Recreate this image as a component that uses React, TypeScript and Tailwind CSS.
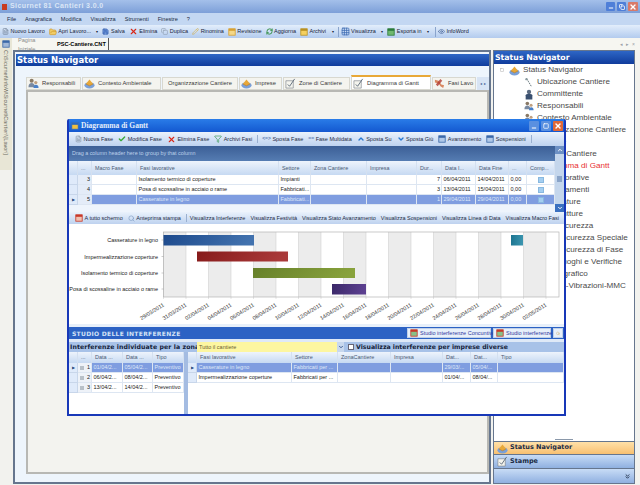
import type { ReactNode } from "react";
import { Check, ChevronDown, ChevronUp, ChevronsDown, Copy, Eye, FileText, Filter, FolderOpen, Grid3x3, Minus, Pencil, RefreshCw, Save, Search, Square, X } from "lucide-react";

const MAIN_COLS = "grid-cols-[9px_14px_45px_142px_32px_56px_50px_25px_34px_33px_18px_28px]";
const LEFT_COLS = "grid-cols-[9px_14px_31px_30px_31px]";
const RIGHT_COLS = "grid-cols-[9px_95px_46px_53px_52px_28px_27px_1fr]";

function Tile({ from, to }: { from: string; to: string }) {
  return (
    <svg viewBox="0 0 10 10" className="w-[8px] h-[8px] shrink-0">
      <rect x="1" y="1" width="8" height="8" fill={from} stroke={to} strokeWidth="1" />
      <rect x="1" y="1" width="8" height="2.5" fill={to} />
    </svg>
  );
}

function People({ size = "w-[11px] h-[11px]" }: { size?: string }) {
  return (
    <svg viewBox="0 0 12 12" className={`${size} shrink-0`}>
      <circle cx="4" cy="3" r="2.2" fill="#8a7a66" />
      <path d="M0.5 10c0-3 1.5-4.5 3.5-4.5S7.5 7 7.5 10z" fill="#7a8aa0" />
      <circle cx="8.5" cy="5" r="1.8" fill="#c0a080" />
      <path d="M6 11c0-2.5 1-3.6 2.7-3.6S11.5 8.5 11.5 11z" fill="#4a80c8" />
    </svg>
  );
}

function Crate({ size = "w-[11px] h-[11px]" }: { size?: string }) {
  return (
    <svg viewBox="0 0 12 12" className={`${size} shrink-0`}>
      <ellipse cx="6" cy="8" rx="5.5" ry="3.5" fill="#7aa0d8" />
      <path d="M2 6.5 6 1.5 10 6.5 6 8.5z" fill="#e8a838" />
      <path d="M2 6.5 6 8.5 10 6.5" fill="none" stroke="#b87818" strokeWidth="0.6" />
    </svg>
  );
}

function Note({ size = "w-[11px] h-[11px]" }: { size?: string }) {
  return (
    <svg viewBox="0 0 12 12" className={`${size} shrink-0`}>
      <path d="M1 3h8v8H1z" fill="#f4f4ee" stroke="#7a8088" strokeWidth="0.7" />
      <path d="M3 7l2 2 5.5-8" fill="none" stroke="#5a6878" strokeWidth="1" />
    </svg>
  );
}

function Tools({ size = "w-[11px] h-[11px]" }: { size?: string }) {
  return (
    <svg viewBox="0 0 12 12" className={`${size} shrink-0`}>
      <path d="M1 2l4 1 3 4 3 1-1 3-3-2-2-3-4-1z" fill="#d88860" />
      <path d="M7 1l2 2-5 6-2-2z" fill="#b03830" opacity="0.8" />
    </svg>
  );
}

function TopBtn({ icon, label, arrow }: { icon: ReactNode; label: string; arrow?: boolean }) {
  return (
    <div className="flex items-center gap-[1.5px] mr-[4px]">
      {icon}
      <span className="whitespace-nowrap">{label}</span>
      {arrow && <span className="ml-[4px] text-[4px]">▾</span>}
    </div>
  );
}

function TitleBar() {
  return (
    <div className="h-[13px] shrink-0 flex items-center bg-gradient-to-b from-[#a4c0ea] to-[#7d9fd8] pl-[2px]">
      <div className="w-[5px] h-[6px] bg-[#c83a20] mr-[3px]" />
      <span className="text-[7px] font-bold tracking-[0.4px] text-[#dbe6f6]">Sicurnet 81 Cantieri 3.0.0</span>
      <div className="ml-auto flex items-center gap-[2px] pr-[2px]">
        <div className="w-[9px] h-[9px] rounded-[1px] bg-[#4f7fd8] flex items-end justify-center text-white"><Minus className="w-[6px] h-[6px]" strokeWidth={4} /></div>
        <div className="w-[9px] h-[9px] rounded-[1px] bg-[#4f7fd8] flex items-center justify-center text-white"><Copy className="w-[6px] h-[6px]" strokeWidth={3} /></div>
        <div className="w-[10px] h-[9px] rounded-[1px] bg-[#d87a6a] flex items-center justify-center text-white"><X className="w-[8px] h-[8px]" strokeWidth={4} /></div>
      </div>
    </div>
  );
}

function MenuBar() {
  return (
    <div className="h-[12px] shrink-0 flex items-center gap-[9px] pl-[7px] bg-[#c3d7f2] text-[#1a2a44] text-[5.6px]">
      {["File", "Anagrafica", "Modifica", "Visualizza", "Strumenti", "Finestre", "?"].map((m) => (
        <span key={m}>{m}</span>
      ))}
    </div>
  );
}

function MainToolbar() {
  return (
    <div className="h-[13px] shrink-0 flex items-center pl-[2px] bg-gradient-to-b from-[#e3eefb] to-[#b3cbee] text-[#16233a] text-[5.5px]">
      <TopBtn icon={<FileText className="w-[7px] h-[7px] text-[#6a7a90]" />} label="Nuovo Lavoro" />
      <TopBtn icon={<FolderOpen className="w-[8px] h-[8px] text-[#d09a28] fill-[#f0cc68]" />} label="Apri Lavoro..." arrow />
      <TopBtn icon={<Save className="w-[7px] h-[7px] text-[#2c58a8] fill-[#6c94d8]" />} label="Salva" />
      <TopBtn icon={<X className="w-[9px] h-[9px] text-[#d82818]" strokeWidth={3} />} label="Elimina" />
      <TopBtn icon={<Copy className="w-[7px] h-[7px] text-[#8a98aa]" />} label="Duplica" />
      <TopBtn icon={<Pencil className="w-[7px] h-[7px] text-[#d8b048]" />} label="Rinomina" />
      <TopBtn icon={<Tile from="#f4d888" to="#d8a030" />} label="Revisione" />
      <TopBtn icon={<RefreshCw className="w-[7px] h-[7px] text-[#2a8a3a]" strokeWidth={3} />} label="Aggiorna" />
      <TopBtn icon={<Tile from="#f4d060" to="#b89020" />} label="Archivi" arrow />
      <div className="w-px h-[10px] bg-[#8aa4cc] mr-[2px]" />
      <TopBtn icon={<Grid3x3 className="w-[9px] h-[9px] text-[#3a68b0]" />} label="Visualizza" arrow />
      <TopBtn icon={<Tile from="#70b870" to="#2a7a3a" />} label="Esporta in" arrow />
      <div className="w-px h-[10px] bg-[#8aa4cc] mx-[2px]" />
      <TopBtn icon={<Eye className="w-[7px] h-[7px] text-[#3a5a90]" />} label="InfoWord" />
    </div>
  );
}

function DocTabs() {
  return (
    <div className="h-[12px] flex items-end pl-[4px] bg-[#f6f6f1] text-[5.6px]">
      <div className="h-[11px] flex items-center px-[2px] text-[#8a8a8a] w-[40px]">Pagina Iniziale</div>
      <div className="h-[12px] flex items-center px-[1px] font-bold text-black border-r border-[#555] pr-[2px]">PSC-Cantiere.CNT</div>
      <div className="ml-auto pr-[5px] pb-[2px] flex gap-[3px] text-[#9aa0a8] text-[5px]">
        <span>◂</span><span>▸</span><span>×</span>
      </div>
    </div>
  );
}

function SheetTabs() {
  const base = "h-[13px] flex items-center gap-[3px] px-[1px] border border-[#d8d8d0] bg-[#f4f4ef] text-[#3a3a3a] text-[5.8px] whitespace-nowrap";
  return (
    <div className="flex items-end h-[15px] ml-[11px] gap-[1px]">
      <div className={`${base} w-[55px]`}><People />Responsabili</div>
      <div className={`${base} w-[79px]`}><Crate />Contesto Ambientale</div>
      <div className={`${base} w-[76px] justify-center`}>Organizzazione Cantiere</div>
      <div className={`${base} w-[43px]`}><Crate />Imprese</div>
      <div className={`${base} w-[67px]`}><Note />Zone di Cantiere</div>
      <div className={`${base} w-[80px] h-[15px] bg-white border-t-2 border-t-[#e8a838]`}><Note />Diagramma di Gantt</div>
      <div className={`${base} w-[44px] overflow-hidden`}><Tools />Fasi Lavo</div>
      <div className="h-[13px] w-[12px] flex items-center justify-center gap-[2px] text-[4px] text-[#3a5a90] bg-[#d8e4f4]"><span>◂</span><span>▸</span></div>
    </div>
  );
}

function DocPanel() {
  return (
    <div className="w-[478px] flex flex-col border-2 border-[#66768e] bg-[#eef5fc]">
      <div className="h-[2px]" />
      <div className="h-[12px] ml-[1px] flex items-center pl-[1px] bg-gradient-to-b from-[#2e66c6] to-[#103c9c] text-white font-bold text-[8.5px] font-['DejaVu_Sans',sans-serif]">
        Status Navigator
      </div>
      <div className="h-[9px]" />
      <SheetTabs />
      <div className="flex-1 ml-[11px] border-2 border-[#b8b8b4] bg-[#f3f3ef]" />
      <div className="h-[8px]" />
    </div>
  );
}

const TREE = [
  "Ubicazione Cantiere", "Committente", "Responsabili", "Contesto Ambientale", "Organizzazione Cantiere",
  "Imprese", "Zone di Cantiere", "Diagramma di Gantt", "Fasi lavorative", "Apprestamenti",
  "Attrezzature", "Infrastrutture", "Costi Sicurezza", "Oneri Sicurezza Speciale", "Oneri Sicurezza di Fase",
  "Sopralluoghi e Verifiche", "Rilievo grafico", "Rumore-Vibrazioni-MMC",
];

function TreeIcon({ name }: { name: string }) {
  if (name === "Committente") {
    return (
      <svg viewBox="0 0 12 12" className="w-[10px] h-[11px] shrink-0">
        <circle cx="6" cy="3" r="2.6" fill="#5a6a80" />
        <path d="M2 12V7q0-2 4-2t4 2v5z" fill="#3a5070" />
      </svg>
    );
  }
  if (name === "Ubicazione Cantiere") {
    return (
      <svg viewBox="0 0 12 12" className="w-[10px] h-[11px] shrink-0">
        <path d="M3 1l6 10" stroke="#6a7a80" strokeWidth="1.2" strokeDasharray="2 1" fill="none" />
        <circle cx="3" cy="2" r="1.4" fill="#8a9aa0" />
      </svg>
    );
  }
  return <People size="w-[10px] h-[10px]" />;
}

function NavPanel() {
  return (
    <div className="w-[142px] flex flex-col border border-[#66768e] bg-white">
      <div className="h-[13px] flex items-center pl-[1px] bg-gradient-to-b from-[#2e66c6] to-[#103c9c] text-white font-bold text-[7.8px] font-['DejaVu_Sans',sans-serif]">
        Status Navigator
      </div>
      <div className="flex-1 pt-[0px] text-[8.1px] text-[#4a4a4a] overflow-hidden">
        <div className="h-[12px] flex items-center pl-[6px]">
          <Square className="w-[4px] h-[4px] text-[#8a8a8a] mr-[5px]" />
          <Crate />
          <span className="ml-[3px]">Status Navigator</span>
        </div>
        {TREE.map((t) => (
          <div key={t} className={`h-[12px] flex items-center pl-[30px] gap-[3px] whitespace-nowrap ${t === "Diagramma di Gantt" ? "text-[#e83030]" : ""}`}>
            <TreeIcon name={t} />
            <span>{t}</span>
          </div>
        ))}
      </div>
      <div className="h-[2px] flex justify-center"><div className="w-[18px] h-px bg-[#8a98aa]" /></div>
      <div className="h-[13px] flex items-center gap-[2px] pl-[3px] border-t border-[#66768e] bg-gradient-to-b from-[#ffe0a8] to-[#f8c070] text-[#1a2a44] font-bold text-[6.5px] font-['DejaVu_Sans',sans-serif]">
        <Crate />Status Navigator
      </div>
      <div className="h-[14px] flex items-center gap-[2px] pl-[3px] border-t border-[#66768e] bg-gradient-to-b from-[#c8dcf6] to-[#8fb0e0] text-[#1a2a44] font-bold text-[6.5px] font-['DejaVu_Sans',sans-serif]">
        <Note />Stampe
      </div>
      <div className="h-[15px] flex items-center justify-end pr-[3px] border-t border-[#66768e] bg-gradient-to-b from-[#c8dcf6] to-[#90b0e0] text-[#1a2a44]">
        <ChevronsDown className="w-[7px] h-[7px]" strokeWidth={3} />
      </div>
    </div>
  );
}

function DlgBtn({ icon, label, last }: { icon?: ReactNode; label: string; last?: boolean }) {
  return (
    <div className={`flex items-center gap-[1.5px] pr-[5px] whitespace-nowrap ${last ? "border-r border-[#9ab0d0]" : ""}`}>
      {icon}
      <span>{label}</span>
    </div>
  );
}

function DialogToolbar() {
  return (
    <div className="h-[14px] shrink-0 flex items-center pl-[6px] bg-gradient-to-b from-[#eaf2fc] to-[#bed2ef] text-[#1c2a44] text-[5.5px]">
      <DlgBtn icon={<FileText className="w-[7px] h-[8px] text-[#7a8898]" />} label="Nuova Fase" />
      <DlgBtn icon={<Check className="w-[8px] h-[8px] text-[#38a838]" strokeWidth={4} />} label="Modifica Fase" />
      <DlgBtn icon={<X className="w-[9px] h-[9px] text-[#d82818]" strokeWidth={3} />} label="Elimina Fase" />
      <DlgBtn icon={<Filter className="w-[8px] h-[8px] text-[#3a9a58]" />} label="Archivi Fasi" last />
      <div className="w-[4px]" />
      <DlgBtn icon={<span className="text-[#5a7ab0] text-[5px] font-bold">&lt;=&gt;</span>} label="Sposta Fase" />
      <DlgBtn icon={<span className="text-[#5a7ab0] text-[5px] font-bold">==</span>} label="Fase Multidata" />
      <DlgBtn icon={<ChevronUp className="w-[8px] h-[8px] text-[#2878d0]" strokeWidth={4} />} label="Sposta Su" />
      <DlgBtn icon={<ChevronDown className="w-[8px] h-[8px] text-[#2878d0]" strokeWidth={4} />} label="Sposta Giù" />
      <DlgBtn icon={<Tile from="#b0c8e8" to="#3a68a8" />} label="Avanzamento" />
      <DlgBtn icon={<Tile from="#b0c8e8" to="#3a68a8" />} label="Sospensioni" last />
    </div>
  );
}

type Row = { n: string; fase: string; sett: string; dur: string; ini: string; fine: string; sel?: boolean };

const PHASES: Row[] = [
  { n: "3", fase: "Isolamento termico di coperture", sett: "Impianti", dur: "7", ini: "06/04/2011", fine: "14/04/2011" },
  { n: "4", fase: "Posa di scossaline in acciaio o rame", sett: "Fabbricati...", dur: "3", ini: "13/04/2011", fine: "15/04/2011" },
  { n: "5", fase: "Casserature in legno", sett: "Fabbricati...", dur: "1", ini: "29/04/2011", fine: "29/04/2011", sel: true },
];

const headCell = "flex items-center pl-[3px] border-r border-[#d4e0f0] whitespace-nowrap overflow-hidden";
const bodyCell = "flex items-center pl-[1.5px] border-r border-b border-[#dde6f2] whitespace-nowrap overflow-hidden";

function PhaseGrid() {
  const heads = ["", "...", "Macro Fase", "Fasi lavorative", "Settore", "Zona Cantiere", "Impresa", "Dur...", "Data I...", "Data Fine", "...", "Comp..."];
  return (
    <div className="h-[66px] shrink-0 flex">
      <div className="flex-1 flex flex-col bg-[#eef4fc]">
        <div className="h-[15px] flex items-center pl-[3px] bg-gradient-to-b from-[#3c5f96] to-[#557cb2] text-[#bcd0ea] text-[5.4px]">
          Drag a column header here to group by that column
        </div>
        <div className={`h-[14px] grid ${MAIN_COLS} bg-gradient-to-b from-[#eef4fc] to-[#c6d9f2] text-[#4a5a74] text-[5.4px]`}>
          {heads.map((h, i) => (
            <div key={i} className={headCell}>{h}</div>
          ))}
        </div>
        {PHASES.map((r) => {
          const cell = `${bodyCell} ${r.sel ? "bg-[#7f9de0] text-[#dfe8f8]" : "bg-white text-[#222]"}`;
          return (
            <div key={r.n} className={`h-[10px] grid ${MAIN_COLS} text-[5.5px]`}>
              <div className="flex items-center justify-center bg-[#dfeafa] border-r border-b border-[#c8d6ea] text-[#2a4a80] text-[4px]">{r.sel ? "▶" : ""}</div>
              <div className={`${bodyCell} justify-end pr-[1px] bg-[#e4ecf8] text-[#222]`}>{r.n}</div>
              <div className={cell} />
              <div className={cell}>{r.fase}</div>
              <div className={cell}>{r.sett}</div>
              <div className={cell} />
              <div className={cell} />
              <div className={`${cell} justify-end pr-[1px]`}>{r.dur}</div>
              <div className={cell}>{r.ini}</div>
              <div className={cell}>{r.fine}</div>
              <div className={cell}>0,00</div>
              <div className={`${cell} justify-center`}>
                <div className="w-[6px] h-[6px] bg-[#a4cef0] border border-[#88b8e0]" />
              </div>
            </div>
          );
        })}
      </div>
      <div className="w-[9px] flex flex-col bg-[#a4bede]">
        <div className="h-[8px] bg-[#6c90c4] flex items-center justify-center text-white"><ChevronUp className="w-[6px] h-[6px]" strokeWidth={4} /></div>
        <div className="flex-1 flex items-center justify-center bg-[#c4d6ec]"><div className="w-[5px] h-[6px] bg-[#8aa4c8]" /></div>
        <div className="h-[8px] bg-[#3a70c0] flex items-center justify-center text-white"><ChevronDown className="w-[6px] h-[6px]" strokeWidth={4} /></div>
      </div>
    </div>
  );
}

function ChartToolbar() {
  return (
    <div className="h-[12px] shrink-0 flex items-center pl-[6px] bg-gradient-to-b from-[#eaf2fc] to-[#bed2ef] text-[#1c2a44] text-[5.5px]">
      <DlgBtn icon={<Tile from="#f0c0b0" to="#c83828" />} label="A tutto schermo" />
      <DlgBtn icon={<Search className="w-[7px] h-[7px] text-[#7898c0]" />} label="Anteprima stampa" last />
      <div className="w-[4px]" />
      <DlgBtn label="Visualizza Interferenze" />
      <DlgBtn label="Visualizza Festività" />
      <DlgBtn label="Visualizza Stato Avanzamento" />
      <DlgBtn label="Visualizza Sospensioni" />
      <DlgBtn label="Visualizza Linea di Data" />
      <DlgBtn label="Visualizza Macro Fasi" />
    </div>
  );
}

const DATES = [
  "29/03/2011", "31/03/2011", "02/04/2011", "04/04/2011", "06/04/2011", "08/04/2011", "10/04/2011", "12/04/2011", "14/04/2011",
  "16/04/2011", "18/04/2011", "20/04/2011", "22/04/2011", "24/04/2011", "26/04/2011", "28/04/2011", "30/04/2011", "02/05/2011",
];
const X0 = 163.5;
const STEP = 22.5;

const BARS = [
  { x1: 163.5, x2: 254, y: 235, h: 10.5, c: "bBlue" },
  { x1: 511, x2: 523, y: 235, h: 10.5, c: "bTeal" },
  { x1: 197, x2: 288, y: 251.5, h: 10, c: "bRed" },
  { x1: 253, x2: 355, y: 268, h: 10, c: "bGreen" },
  { x1: 332, x2: 366, y: 284, h: 10.5, c: "bPurple" },
];

const LABELS: [string, number][] = [
  ["Casserature in legno", 240],
  ["Impermealizzazione coperture", 256.5],
  ["Isolamento termico di coperture", 273],
  ["Posa di scossaline in acciaio o rame", 289],
];

function GanttChart() {
  const grads: [string, string, string][] = [
    ["bBlue", "#1d4a8c", "#4272ae"],
    ["bTeal", "#1c7490", "#3a94ae"],
    ["bRed", "#861a1a", "#aa3a3a"],
    ["bGreen", "#66802a", "#88a23c"],
    ["bPurple", "#3a2868", "#5c4090"],
  ];
  return (
    <div className="h-[100px] shrink-0 bg-white">
      <svg viewBox="69 224 495 100" className="w-[495px] h-[100px] block">
        <defs>
          {grads.map(([id, a, b]) => (
            <linearGradient key={id} id={id} x1="0" y1="0" x2="1" y2="0.1">
              <stop offset="0" stopColor={a} />
              <stop offset="1" stopColor={b} />
            </linearGradient>
          ))}
        </defs>
        {DATES.map((d, i) => {
          const x = X0 + i * STEP;
          return (
            <g key={d}>
              {i % 2 === 0 && <rect x={x} y="232" width={Math.min(STEP, 559 - x)} height="65" fill="#ececec" />}
              <line x1={x} y1="232" x2={x} y2="299" stroke="#c8c8c8" strokeWidth="0.5" />
              <text x={x + 1} y="306" textAnchor="end" transform={`rotate(-32 ${x + 1} 306)`} fontSize="5.5" fill="#333" fontFamily="Liberation Sans, sans-serif">{d}</text>
            </g>
          );
        })}
        <rect x={X0} y="232" width={559 - X0} height="65" fill="none" stroke="#b4b4b4" strokeWidth="0.7" />
        {[240, 256.5, 273, 289].map((y) => (
          <line key={y} x1={X0 - 2} y1={y} x2={X0} y2={y} stroke="#999" strokeWidth="0.5" />
        ))}
        {BARS.map((b) => (
          <rect key={b.c} x={b.x1} y={b.y} width={b.x2 - b.x1} height={b.h} fill={`url(#${b.c})`} />
        ))}
        {LABELS.map(([t, y]) => (
          <text key={t} x="158" y={y + 2} textAnchor="end" fontSize="5.5" fill="#222" fontFamily="Liberation Sans, sans-serif">{t}</text>
        ))}
      </svg>
    </div>
  );
}

function StudyBand() {
  const btn = "h-[10px] flex items-center gap-[2px] px-[2px] bg-[#e8f0fa] border border-[#c0d0e8] text-[#3038a0] text-[5.5px] whitespace-nowrap";
  return (
    <div className="h-[12px] shrink-0 flex items-center pl-[3px] bg-[#2c62c4] text-[#d4e2f6] text-[6px] font-bold tracking-[0.3px] font-['DejaVu_Sans',sans-serif]">
      <span>STUDIO DELLE INTERFERENZE</span>
      <div className="ml-auto flex gap-[2px] pr-[1px] font-['Liberation_Sans',sans-serif] font-normal tracking-normal">
        <div className={`${btn} w-[84px]`}><Tile from="#88c088" to="#c83828" />Studio interferenze Concuntivo</div>
        <div className={`${btn} w-[58px]`}><Tile from="#88c088" to="#c83828" />Studio interferenze</div>
        <div className={`${btn} w-[10px] px-0 justify-center`}><Search className="w-[7px] h-[7px] text-[#c8a050]" /></div>
      </div>
    </div>
  );
}

function StudyFilter() {
  return (
    <div className="h-[13px] shrink-0 flex items-end bg-[#dfe9f7]">
      <div className="h-[10px] w-[128px] flex items-center pl-[1px] bg-[#a8c2e8] text-[#14223a] text-[6.2px] font-bold tracking-[0.1px] font-['DejaVu_Sans',sans-serif] whitespace-nowrap overflow-hidden">
        Interferenze individuate per la zona :
      </div>
      <div className="h-[10px] w-[140px] flex items-center pl-[2px] bg-[#fdf6a0] text-[#6a6030] text-[5.5px]">Tutto il cantiere</div>
      <div className="h-[10px] w-[7px] flex items-center justify-center bg-[#c8d8ee] text-[#3a5a90]"><ChevronDown className="w-[6px] h-[6px]" strokeWidth={4} /></div>
      <div className="h-[10px] flex-1 flex items-center pl-[4px] gap-[2px] bg-[#a8c2e8] text-[#14223a] text-[6.2px] font-bold font-['DejaVu_Sans',sans-serif] whitespace-nowrap">
        <div className="w-[6px] h-[6px] bg-white border border-[#667]" />
        Visualizza interferenze per imprese diverse
      </div>
    </div>
  );
}

const LEFT_ROWS = [
  { n: "1", a: "01/04/2...", b: "05/04/2...", t: "Preventivo", sel: true },
  { n: "2", a: "06/04/2...", b: "08/04/2...", t: "Preventivo" },
  { n: "3", a: "13/04/2...", b: "14/04/2...", t: "Preventivo" },
];

const RIGHT_ROWS = [
  { f: "Casserature in legno", s: "Fabbricati per ...", a: "29/03/...", b: "05/04/...", sel: true },
  { f: "Impermealizzazione coperture", s: "Fabbricati per ...", a: "01/04/...", b: "08/04/..." },
];

function StudyTables() {
  return (
    <div className="flex-1 flex text-[5.5px] bg-white min-h-0">
      <div className="w-[115px]">
        <div className={`h-[11px] grid ${LEFT_COLS} bg-gradient-to-b from-[#eef4fc] to-[#c6d9f2] text-[#4a5a74]`}>
          {["", "...", "Data ...", "Data ...", "Tipo"].map((h, i) => (
            <div key={i} className={headCell}>{h}</div>
          ))}
        </div>
        {LEFT_ROWS.map((r) => {
          const cell = `${bodyCell} ${r.sel ? "bg-[#7f9de0] text-[#dfe8f8]" : "bg-white text-[#222]"}`;
          return (
            <div key={r.n} className={`h-[10px] grid ${LEFT_COLS}`}>
              <div className="flex items-center justify-center bg-[#dfeafa] border-r border-b border-[#c8d6ea] text-[#2a4a80] text-[4px]">{r.sel ? "▶" : ""}</div>
              <div className={`${bodyCell} justify-between pr-[1px] bg-[#eef2f8] text-[#222]`}>
                <div className="w-[4px] h-[4px] bg-[#b8c0c8]" />{r.n}
              </div>
              <div className={cell}>{r.a}</div>
              <div className={cell}>{r.b}</div>
              <div className={cell}>{r.t}</div>
            </div>
          );
        })}
      </div>
      <div className="w-[4px] bg-[#a4bce2]" />
      <div className="flex-1">
        <div className={`h-[11px] grid ${RIGHT_COLS} bg-gradient-to-b from-[#eef4fc] to-[#c6d9f2] text-[#4a5a74]`}>
          {["", "Fasi lavorative", "Settore", "ZonaCantiere", "Impresa", "Dat...", "Dat...", "Tipo"].map((h, i) => (
            <div key={i} className={headCell}>{h}</div>
          ))}
        </div>
        {RIGHT_ROWS.map((r) => {
          const cell = `${bodyCell} ${r.sel ? "bg-[#7f9de0] text-[#dfe8f8]" : "bg-white text-[#222]"}`;
          return (
            <div key={r.f} className={`h-[10px] grid ${RIGHT_COLS}`}>
              <div className="flex items-center justify-center bg-[#dfeafa] border-r border-b border-[#c8d6ea] text-[#2a4a80] text-[4px]">{r.sel ? "▶" : ""}</div>
              <div className={cell}>{r.f}</div>
              <div className={cell}>{r.s}</div>
              <div className={cell} />
              <div className={cell} />
              <div className={cell}>{r.a}</div>
              <div className={cell}>{r.b}</div>
              <div className={cell} />
            </div>
          );
        })}
      </div>
    </div>
  );
}

function GanttDialog() {
  return (
    <div className="absolute left-[67px] top-[119px] w-[499px] h-[297px] flex flex-col border-x-2 border-b-2 border-[#1838b8] bg-[#eef4fc] rounded-t-[2px]">
      <div className="h-[13px] shrink-0 flex items-center pl-[2px] bg-gradient-to-b from-[#2a7ce8] to-[#1458d0] text-[#e4eefa] text-[7.5px] font-bold font-['Liberation_Serif',serif]">
        <Tile from="#f0c040" to="#2a68c0" />
        <span className="ml-[2px]">Diagramma di Gantt</span>
        <div className="ml-auto flex items-center gap-[2px] pr-[1px]">
          <div className="w-[10px] h-[10px] rounded-[1px] bg-[#5a90e0] flex items-end justify-center text-white"><Minus className="w-[6px] h-[6px]" strokeWidth={4} /></div>
          <div className="w-[10px] h-[10px] rounded-[1px] bg-[#5a90e0] flex items-center justify-center text-white"><Square className="w-[6px] h-[6px]" strokeWidth={3} /></div>
          <div className="w-[10px] h-[10px] rounded-[1px] bg-[#e06838] flex items-center justify-center text-white"><X className="w-[8px] h-[8px]" strokeWidth={4} /></div>
        </div>
      </div>
      <DialogToolbar />
      <PhaseGrid />
      <ChartToolbar />
      <GanttChart />
      <div className="h-[3px] shrink-0 bg-[#e8f0fa]" />
      <StudyBand />
      <StudyFilter />
      <StudyTables />
    </div>
  );
}

export default function App() {
  return (
    <div className="relative w-[640px] h-[485px] overflow-hidden flex flex-col bg-[#f2f2ee] font-['Liberation_Sans',sans-serif]">
      <TitleBar />
      <MenuBar />
      <MainToolbar />
      <div className="flex-1 flex min-h-0">
        <div className="w-[12px] shrink-0 flex flex-col">
          <div className="h-[132px] flex flex-col items-center bg-[#e8e6d6] pt-[2px] text-[#6a6a60] text-[5.5px]">
            <Tile from="#a0b8d8" to="#3a68a8" />
            <span className="mt-[2px] whitespace-nowrap [writing-mode:vertical-rl]">C:\Sicurnet\InfoW\Sicurnet\Cantieri\[Lavori]</span>
          </div>
        </div>
        <div className="flex-1 flex flex-col min-w-0">
          <DocTabs />
          <div className="h-[434px] flex gap-[2px] pl-[1px]">
            <DocPanel />
            <NavPanel />
          </div>
        </div>
      </div>
      <GanttDialog />
    </div>
  );
}
